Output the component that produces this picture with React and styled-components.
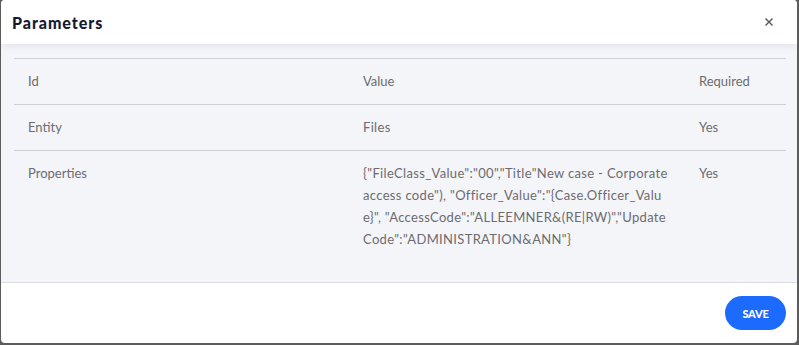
import styled, { createGlobalStyle } from "styled-components";

const GlobalStyle = createGlobalStyle`
  html, body {
    margin: 0;
    padding: 0;
    background: #5c5c5c;
    font-family: Lato, "Noto Sans", sans-serif;
  }
`;

const Modal = styled.div`
  margin: 0 2px 0 1px;
  height: 343px;
  background: #ffffff;
  border-radius: 4px;
  display: flex;
  flex-direction: column;
  overflow: hidden;
`;

const Header = styled.div`
  height: 44px;
  flex: none;
  display: flex;
  align-items: center;
  justify-content: space-between;
  padding: 0 22px 0 11px;
  background: #ffffff;
  box-shadow: 0 2px 8px rgba(30, 35, 60, 0.08);
  position: relative;
  z-index: 1;
`;

const Title = styled.h2`
  margin: 0;
  font-size: 16px;
  font-weight: 900;
  color: #161a33;
  letter-spacing: 0.95px;
`;

const Close = styled.button`
  border: none;
  background: none;
  padding: 0;
  width: 12px;
  height: 12px;
  display: flex;
  cursor: pointer;
`;

const Body = styled.div`
  flex: 1;
  background: #f4f5f9;
  padding: 14px 11px 0 13px;
`;

const Table = styled.table`
  width: 100%;
  table-layout: fixed;
  border-collapse: collapse;
  border-top: 1px solid #cfd0d6;
  font-size: 13px;
  line-height: 22px;
  color: #6c6c70;
`;

const Row = styled.tr`
  border-bottom: ${(p) => (p.$last ? "none" : "1px solid #cfd0d6")};
`;

const Cell = styled.td`
  box-sizing: border-box;
  padding: 11px 14px 12px;
  vertical-align: top;
  word-break: ${(p) => (p.$wrap ? "break-all" : "normal")};
  letter-spacing: ${(p) => (p.$wrap ? "0.33px" : "0")};
  font-weight: 400;
  text-align: left;
`;

const Footer = styled.div`
  height: 60px;
  flex: none;
  border-top: 1px solid #dcdde2;
  display: flex;
  align-items: center;
  justify-content: flex-end;
  padding: 0 11px;
`;

const SaveButton = styled.button`
  width: 61px;
  height: 34px;
  border: none;
  border-radius: 17px;
  background: #1d6aff;
  color: #ffffff;
  font-family: Lato, sans-serif;
  font-size: 11px;
  font-weight: 900;
  letter-spacing: -0.2px;
  cursor: pointer;
`;

const rows = [
  { id: "Entity", value: "Files", required: "Yes" },
  {
    id: "Properties",
    value:
      '{"FileClass_Value":"00","Title"New case - Corporate access code"), "Officer_Value":"{Case.Officer_Value}", "AccessCode":"ALLEEMNER&(RE|RW)","UpdateCode":"ADMINISTRATION&ANN"}',
    required: "Yes",
  },
];

export default function App() {
  return (
    <>
      <GlobalStyle />
      <Modal>
        <Header>
          <Title>Parameters</Title>
          <Close aria-label="close">
            <svg width="12" height="12" viewBox="0 0 12 12">
              <path d="M2.5 2.5L9.5 9.5M9.5 2.5L2.5 9.5" stroke="#555" strokeWidth="1.4" />
            </svg>
          </Close>
        </Header>
        <Body>
          <Table>
            <colgroup>
              <col style={{ width: "335px" }} />
              <col style={{ width: "336px" }} />
              <col />
            </colgroup>
            <tbody>
              <Row>
                <Cell as="th">Id</Cell>
                <Cell as="th">Value</Cell>
                <Cell as="th">Required</Cell>
              </Row>
              {rows.map((r, i) => (
                <Row key={r.id} $last={i === rows.length - 1}>
                  <Cell>{r.id}</Cell>
                  <Cell $wrap>{r.value}</Cell>
                  <Cell>{r.required}</Cell>
                </Row>
              ))}
            </tbody>
          </Table>
        </Body>
        <Footer>
          <SaveButton>SAVE</SaveButton>
        </Footer>
      </Modal>
    </>
  );
}
